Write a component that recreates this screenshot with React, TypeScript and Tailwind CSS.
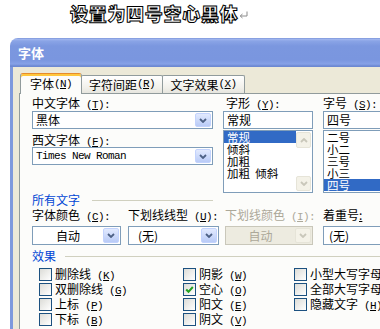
import React from "react";

function Mn({ k, colon = false }: { k: string; colon?: boolean }) {
  return (
    <span className="font-['Liberation_Mono',monospace] text-[11px] tracking-[-0.6px]">
      {" ("}
      <span className="underline underline-offset-[1px]">{k}</span>
      {")"}
      {colon ? ":" : ""}
    </span>
  );
}

function Chevron({ up = false, color }: { up?: boolean; color: string }) {
  return (
    <svg width="8" height="5" viewBox="0 0 8 5">
      <path
        d={up ? "M1 4 L4 1 L7 4" : "M1 1 L4 4 L7 1"}
        fill="none"
        stroke={color}
        strokeWidth="1.8"
      />
    </svg>
  );
}

function Combo({
  children,
  disabled = false,
  inner = "",
  h = "h-[18px]",
}: {
  children: React.ReactNode;
  disabled?: boolean;
  inner?: string;
  h?: string;
}) {
  return (
    <div
      className={`flex ${h} border ${
        disabled ? "border-[#C9C7BA] bg-[#EDEBE0] text-[#ACA899]" : "border-[#7F9DB9] bg-white"
      }`}
    >
      <div className={`flex-1 flex items-center overflow-hidden whitespace-nowrap ${inner}`}>
        {children}
      </div>
      <div
        className={`w-[16px] my-px mr-px rounded-[2px] border flex items-center justify-center ${
          disabled
            ? "border-[#E6E4D8] bg-[#F4F2E8]"
            : "border-[#C3D3FD] bg-[linear-gradient(to_bottom,#E2EAFE,#B9CBF7)]"
        }`}
      >
        <Chevron color={disabled ? "#C9C7BA" : "#4D6185"} />
      </div>
    </div>
  );
}

function ListBox({
  items,
  selected,
  scroll = false,
}: {
  items: string[];
  selected: number;
  scroll?: boolean;
}) {
  return (
    <div className="mt-px h-[63px] flex border border-[#7F9DB9] bg-white">
      <div className="flex-1">
        {items.map((t, i) => (
          <div
            key={t}
            className={`h-[12px] leading-[12px] text-[11.5px] pl-[3px] whitespace-pre ${
              i === selected ? "bg-[#316AC5] text-white" : ""
            }`}
          >
            {t}
          </div>
        ))}
      </div>
      {scroll && (
        <div className="w-[16px] flex flex-col justify-between py-px pr-px">
          <div className="h-[16px] rounded-[2px] border border-[#E6E4D8] bg-[#F4F2E8] flex items-center justify-center">
            <Chevron up color="#C9C7BA" />
          </div>
          <div className="h-[15px] rounded-[2px] border border-[#E6E4D8] bg-[#F4F2E8] flex items-center justify-center">
            <Chevron color="#C9C7BA" />
          </div>
        </div>
      )}
    </div>
  );
}

function Check({ label, checked = false }: { label: React.ReactNode; checked?: boolean }) {
  return (
    <div className="h-[15px] flex items-center gap-[3px] whitespace-nowrap">
      <div className="w-[13px] h-[13px] shrink-0 border border-[#1C5180] bg-[linear-gradient(135deg,#DCDCD7,#FFFFFF)] flex items-center justify-center">
        {checked && (
          <svg width="9" height="9" viewBox="0 0 9 9">
            <path d="M1.2 4.5 L3.5 6.8 L7.8 2" fill="none" stroke="#21A121" strokeWidth="2" />
          </svg>
        )}
      </div>
      <span className="leading-[15px]">{label}</span>
    </div>
  );
}

export default function App() {
  return (
    <div className="w-[380px] h-[329px] overflow-hidden bg-white font-['Noto_Sans_CJK_SC',sans-serif] text-[12px] text-black">
      <div className="h-[38px] pl-[70px] flex items-start">
        <span className="text-[18px] leading-[27px] font-black tracking-[0.7px] text-white [-webkit-text-stroke:1px_#000]">
          设置为四号空心黑体
        </span>
        <svg width="9" height="8" viewBox="0 0 9 8" className="mt-[11px] ml-px">
          <path d="M8 0.5 V5 H1.5 M3.5 3 L1.2 5 L3.5 7" fill="none" stroke="#8c8c8c" strokeWidth="1" />
        </svg>
      </div>

      <div className="ml-[10px] w-[420px]">
        <div className="h-[29px] rounded-tl-[8px] bg-[linear-gradient(to_bottom,#6d89d3_0px,#a3b8ef_1px,#8aa4e6_3px,#7b97df_8px,#7a96df_22px,#86a1e7_26px,#6c88d2_28px)] flex items-center pl-[8px] text-white font-bold text-[13px]">
          字体
        </div>

        <div className="bg-[#ECE9D8] border-l-[3px] border-[#7e99dd] pl-[6px] pt-[6px]">
          <div className="flex items-end h-[20px] pl-px">
            <div className="relative z-10 -mb-px w-[62px] h-[21px] border-x border-t border-[#919B9C] border-t-[#E68B2C] rounded-t-[3px] shadow-[inset_0_2px_0_#FFC73C] bg-[#FCFCFA] flex items-center justify-center whitespace-nowrap">
              字体<Mn k="N" />
            </div>
            <div className="-ml-px w-[82px] h-[18px] border-x border-t border-[#919B9C] rounded-t-[2px] bg-[linear-gradient(to_bottom,#ffffff,#f1f0ea_70%,#e6e5de)] flex items-center justify-center whitespace-nowrap">
              字符间距<Mn k="R" />
            </div>
            <div className="-ml-px w-[83px] h-[18px] border-x border-t border-[#919B9C] rounded-t-[2px] bg-[linear-gradient(to_bottom,#ffffff,#f1f0ea_70%,#e6e5de)] flex items-center justify-center whitespace-nowrap">
              文字效果<Mn k="X" />
            </div>
          </div>

          <div className="w-[400px] border border-[#919B9C] bg-[#FCFCFA] pl-[12px] pt-[2px] pb-[20px]">
            <div className="flex">
              <div className="w-[181px]">
                <div className="h-[15px] leading-[14px] whitespace-nowrap">
                  中文字体<Mn k="T" colon />
                </div>
                <Combo inner="pl-[3px]">黑体</Combo>
                <div className="mt-[4px] h-[14px] leading-[14px] whitespace-nowrap">
                  西文字体<Mn k="F" colon />
                </div>
                <Combo inner="pl-[3px]">
                  <span className="font-['Liberation_Mono',monospace] text-[11px] tracking-[-0.6px]">
                    Times New Roman
                  </span>
                </Combo>
              </div>

              <div className="ml-[10px] w-[90px]">
                <div className="h-[15px] leading-[14px] pl-[3px] whitespace-nowrap">
                  字形<Mn k="Y" colon />
                </div>
                <div className="h-[18px] border border-[#7F9DB9] bg-white pl-[3px] flex items-center">常规</div>
                <ListBox items={["常规", "倾斜", "加粗", "加粗  倾斜"]} selected={0} scroll />
              </div>

              <div className="ml-[10px] w-[90px]">
                <div className="h-[15px] leading-[14px] whitespace-nowrap">
                  字号<Mn k="S" colon />
                </div>
                <div className="h-[18px] border border-[#7F9DB9] bg-white pl-[3px] flex items-center">四号</div>
                <ListBox items={["二号", "小二", "三号", "小三", "四号"]} selected={4} />
              </div>
            </div>

            <div className="h-[14px] w-[181px] flex items-center">
              <span className="text-[#0046D5] leading-[14px]">所有文字</span>
              <div className="ml-[12px] flex-1 h-px bg-[#D0D0BF]" />
            </div>

            <div className="mt-px flex h-[14px] leading-[14px] whitespace-nowrap">
              <div className="w-[89px]">
                字体颜色<Mn k="C" colon />
              </div>
              <div className="ml-[7px] w-[91px]">
                下划线线型<Mn k="U" colon />
              </div>
              <div className="ml-[6px] w-[88px] text-[#ACA899]">
                下划线颜色<Mn k="I" colon />
              </div>
              <div className="ml-[10px] w-[90px]">
                着重号<span className="underline">:</span>
              </div>
            </div>

            <div className="mt-[4px] flex">
              <div className="w-[89px]">
                <Combo h="h-[19px]" inner="justify-center">自动</Combo>
              </div>
              <div className="ml-[7px] w-[91px]">
                <Combo h="h-[19px]" inner="pl-[9px]">(无)</Combo>
              </div>
              <div className="ml-[6px] w-[88px]">
                <Combo h="h-[19px]" inner="justify-center" disabled>
                  自动
                </Combo>
              </div>
              <div className="ml-[10px] w-[90px]">
                <Combo h="h-[19px]" inner="pl-[5px]">(无)</Combo>
              </div>
            </div>

            <div className="mt-[4px] h-[14px] flex items-center">
              <span className="text-[#0046D5] leading-[14px]">效果</span>
              <div className="ml-[9px] flex-1 h-px bg-[#D0D0BF]" />
            </div>

            <div className="mt-[4px] pl-[7px] flex">
              <div className="w-[144px]">
                <Check label={<>删除线<Mn k="K" /></>} />
                <Check label={<>双删除线<Mn k="G" /></>} />
                <Check label={<>上标<Mn k="P" /></>} />
                <Check label={<>下标<Mn k="B" /></>} />
              </div>
              <div className="w-[111px]">
                <Check label={<>阴影<Mn k="W" /></>} />
                <Check label={<>空心<Mn k="O" /></>} checked />
                <Check label={<>阳文<Mn k="E" /></>} />
                <Check label={<>阴文<Mn k="V" /></>} />
              </div>
              <div>
                <Check label={<>小型大写字母<Mn k="M" /></>} />
                <Check label={<>全部大写字母<Mn k="A" /></>} />
                <Check label={<>隐藏文字<Mn k="H" /></>} />
              </div>
            </div>
          </div>
        </div>
      </div>
    </div>
  );
}
